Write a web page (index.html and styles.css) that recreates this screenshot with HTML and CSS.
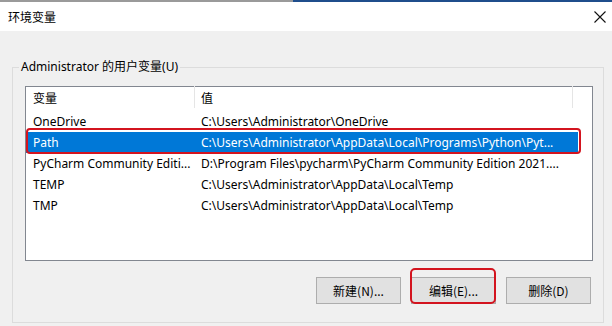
FILE: index.html
```html
<!DOCTYPE html>
<html lang="zh-CN">
<head>
  <meta charset="UTF-8" />
  <title>环境变量</title>
  <link rel="stylesheet" href="styles.css">
</head>
<body>

  <div class="top-strip">
    <div class="strip-left"></div>
    <div class="strip-right"></div>
  </div>

  <div class="title-bar">
    <span class="title">环境变量</span>
    <span class="close">
      <svg width="12" height="12" viewBox="0 0 12 12">
        <path d="M0.5 0.5 L11.5 11.5 M11.5 0.5 L0.5 11.5" stroke="#111" stroke-width="1.1" fill="none" />
      </svg>
    </span>
  </div>

  <div class="dialog-body">
    <fieldset class="group">
      <legend>Administrator 的用户变量(U)</legend>

      <div class="list-view">
        <div class="list-header">
          <div class="col-name">变量</div>
          <div class="col-value">值</div>
        </div>

        <div class="list-row">
          <div class="col-name">OneDrive</div>
          <div class="col-value">C:\Users\Administrator\OneDrive</div>
        </div>
        <div class="list-row selected">
          <div class="col-name">Path</div>
          <div class="col-value">C:\Users\Administrator\AppData\Local\Programs\Python\Pyt...</div>
        </div>
        <div class="list-row">
          <div class="col-name">PyCharm Community Editi...</div>
          <div class="col-value">D:\Program Files\pycharm\PyCharm Community Edition 2021....</div>
        </div>
        <div class="list-row">
          <div class="col-name">TEMP</div>
          <div class="col-value">C:\Users\Administrator\AppData\Local\Temp</div>
        </div>
        <div class="list-row">
          <div class="col-name">TMP</div>
          <div class="col-value">C:\Users\Administrator\AppData\Local\Temp</div>
        </div>

        <!-- marcação vermelha em volta da linha Path -->
        <div class="mark mark-row"></div>
      </div>

      <div class="button-row">
        <button>新建(N)...</button>
        <button class="marked">编辑(E)...<span class="mark mark-btn"></span></button>
        <button>删除(D)</button>
      </div>
    </fieldset>
  </div>

</body>
</html>
```

FILE: styles.css
```css
body {
  margin: 0;
  width: 612px;
  height: 326px;
  overflow: hidden;
  background: #f0f0f0;
  font-family: "Noto Sans", "Noto Sans CJK SC", sans-serif;
  font-size: 12px;
  color: #000;
}

/* faixa da janela de trás */
.top-strip {
  display: flex;
  height: 2px;
}

.strip-left {
  width: 293px;
  background: #9a9a9a;
}

.strip-right {
  flex-grow: 1;
  background: #1f4e8c;
}

.title-bar {
  height: 29px;
  background: #fff;
  display: flex;
  justify-content: space-between;
  align-items: center;
  padding: 0 6px 0 8px;
}

.title {
  font-family: "Noto Sans CJK SC", sans-serif;
  font-size: 12px;
  line-height: 16px;
}

.close svg {
  display: block;
}

.dialog-body {
  padding: 28px 0 0 12px;
}

.group {
  box-sizing: border-box;
  width: 592px;
  height: 264px;
  margin: 0;
  padding: 11px 10px 0 12px;
  border: 1px solid #dcdcdc;
  min-inline-size: 0;
}

.group legend {
  margin-left: -6px;
  padding: 0 2px;
  line-height: 16px;
}

.list-view {
  position: relative;
  box-sizing: border-box;
  width: 568px;
  height: 175px;
  background: #fff;
  border: 1px solid #828790;
}

.list-header,
.list-row {
  display: grid;
  grid-template-columns: 169px 378px;
  white-space: nowrap;
}

.list-header {
  height: 24px;
  align-items: center;
}

.list-header .col-name,
.list-header .col-value {
  border-right: 1px solid #e5e5e5;
  height: 18px;
  line-height: 18px;
  margin-top: -4px;
  padding-top: 4px;
}

.list-row {
  height: 21px;
  line-height: 21px;
  width: 552px;
}

.col-name {
  padding-left: 7px;
  overflow: hidden;
}

.col-value {
  padding-left: 6px;
  overflow: hidden;
}

.list-row.selected {
  background: #0078d7;
  color: #fff;
}

.mark {
  position: absolute;
  box-sizing: border-box;
  border: 2px solid #d3141f;
  border-radius: 4px;
  pointer-events: none;
}

.mark-row {
  top: 41px;
  left: 0;
  width: 555px;
  height: 26px;
}

.button-row {
  display: flex;
  justify-content: flex-end;
  gap: 10px;
  margin-top: 16px;
  padding-right: 2px;
}

.button-row button {
  position: relative;
  width: 85px;
  height: 27px;
  background: #e1e1e1;
  border: 1px solid #adadad;
  font-family: "Noto Sans CJK SC", "Noto Sans", sans-serif;
  font-size: 12px;
  color: #000;
  padding: 0;
}

.mark-btn {
  top: -10px;
  left: -2px;
  right: -1px;
  bottom: -1px;
  border-radius: 5px;
}
```
